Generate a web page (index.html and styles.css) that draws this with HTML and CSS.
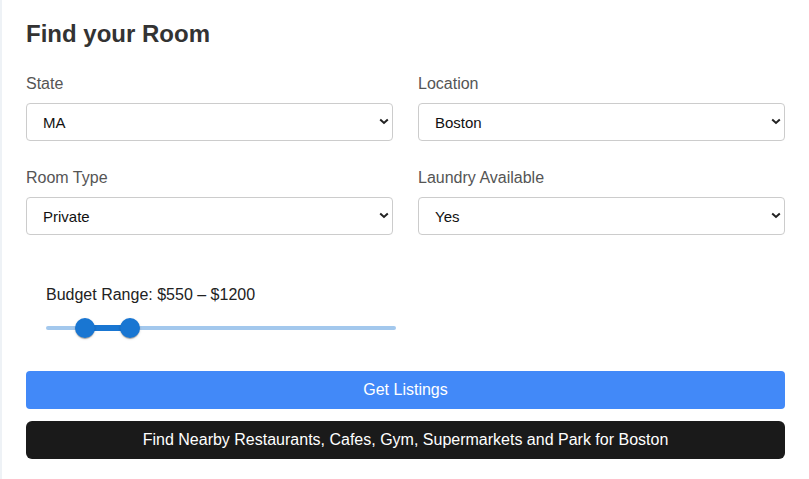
FILE: index.html
```html
<!DOCTYPE html>
<html lang="en">
<head>
<meta charset="utf-8">
<title>Find your Room</title>
<link rel="stylesheet" href="styles.css">
</head>
<body>
<div class="page">
  <div class="card">
    <h2 class="title">Find your Room</h2>
    <div class="grid">
      <div class="field">
        <label class="label">State</label>
        <div class="select-wrap">
          <select class="select"><option>MA</option></select>
          <svg class="chev" width="10" height="7" viewBox="0 0 10 7"><path d="M1.2 1.5 L5 5 L8.8 1.5" fill="none" stroke="#222" stroke-width="2"/></svg>
        </div>
      </div>
      <div class="field">
        <label class="label">Location</label>
        <div class="select-wrap">
          <select class="select"><option>Boston</option></select>
          <svg class="chev" width="10" height="7" viewBox="0 0 10 7"><path d="M1.2 1.5 L5 5 L8.8 1.5" fill="none" stroke="#222" stroke-width="2"/></svg>
        </div>
      </div>
      <div class="field">
        <label class="label">Room Type</label>
        <div class="select-wrap">
          <select class="select"><option>Private</option></select>
          <svg class="chev" width="10" height="7" viewBox="0 0 10 7"><path d="M1.2 1.5 L5 5 L8.8 1.5" fill="none" stroke="#222" stroke-width="2"/></svg>
        </div>
      </div>
      <div class="field">
        <label class="label">Laundry Available</label>
        <div class="select-wrap">
          <select class="select"><option>Yes</option></select>
          <svg class="chev" width="10" height="7" viewBox="0 0 10 7"><path d="M1.2 1.5 L5 5 L8.8 1.5" fill="none" stroke="#222" stroke-width="2"/></svg>
        </div>
      </div>
    </div>
    <div class="budget">
      <div class="budget-label">Budget Range: $550 – $1200</div>
      <div class="slider">
        <div class="rail"></div>
        <div class="track" style="left: 11%; width: 13%;"></div>
        <div class="thumb" style="left: 11%;"></div>
        <div class="thumb" style="left: 24%;"></div>
      </div>
    </div>
    <button class="btn btn-primary">Get Listings</button>
    <button class="btn btn-dark">Find Nearby Restaurants, Cafes, Gym, Supermarkets and Park for Boston</button>
  </div>
</div>
</body>
</html>
```
FILE: styles.css
```css
* { box-sizing: border-box; }
html, body { margin: 0; padding: 0; }
body {
  background: #eef2f6;
  font-family: "Liberation Sans", Arial, Helvetica, sans-serif;
  color: #333;
}
.page {
  padding-left: 2px;
  min-height: 479px;
}
.card {
  background: #fff;
  min-height: 479px;
  padding: 20px 24px 20px 24px;
  display: flex;
  flex-direction: column;
}
.title {
  margin: 0 0 26px 0;
  font-size: 24px;
  line-height: 28px;
  font-weight: bold;
  color: #333;
}
.grid {
  display: grid;
  grid-template-columns: 1fr 1fr;
  column-gap: 25px;
  row-gap: 27px;
}
.field {
  display: flex;
  flex-direction: column;
}
.label {
  font-size: 16px;
  line-height: 19px;
  color: #555;
  margin-bottom: 10px;
}
.select-wrap {
  position: relative;
}
.select {
  appearance: none;
  -webkit-appearance: none;
  width: 100%;
  height: 38px;
  border: 1px solid #cccccc;
  border-radius: 4px;
  background: #fff;
  padding: 0 30px 0 16px;
  font-family: "Liberation Sans", Arial, sans-serif;
  font-size: 15px;
  color: #111;
}
.chev {
  position: absolute;
  right: 4px;
  top: 15px;
  pointer-events: none;
}
.budget {
  margin-top: 30px;
  padding: 20px;
  width: 390px;
}
.budget-label {
  font-size: 16px;
  line-height: 19px;
  color: #222;
}
.slider {
  position: relative;
  width: 350px;
  height: 20px;
  margin-top: 14px;
}
.rail {
  position: absolute;
  left: 0;
  right: 0;
  top: 8px;
  height: 4px;
  border-radius: 2px;
  background: #1976d2;
  opacity: 0.4;
}
.track {
  position: absolute;
  top: 7px;
  height: 6px;
  background: #1976d2;
}
.thumb {
  position: absolute;
  top: 0;
  width: 20px;
  height: 20px;
  margin-left: -10px;
  border-radius: 50%;
  background: #1976d2;
  box-shadow: 0 2px 1px -1px rgba(0,0,0,0.2), 0 1px 1px rgba(0,0,0,0.14), 0 1px 3px rgba(0,0,0,0.12);
}
.btn {
  display: block;
  width: 100%;
  height: 38px;
  border: none;
  color: #fff;
  font-family: "Liberation Sans", Arial, sans-serif;
  font-size: 16px;
}
.btn-primary {
  margin-top: 13px;
  background: #4289f8;
  border-radius: 4px;
}
.btn-dark {
  margin-top: 12px;
  background: #1a1a1a;
  border-radius: 6px;
}
```
